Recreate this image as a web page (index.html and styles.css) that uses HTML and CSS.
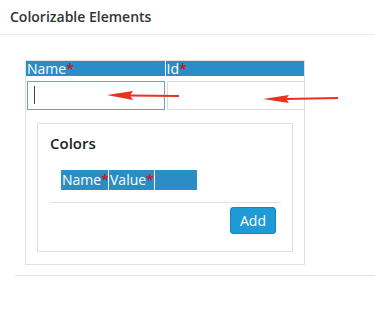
FILE: index.html
```html
<!DOCTYPE html>
<html lang="en">
<head>
  <meta charset="UTF-8" />
  <title>Colorizable Elements</title>
  <link rel="stylesheet" href="styles.css">
</head>
<body>
  <div class="title">Colorizable Elements</div>

  <div class="panel">
    <div class="box">
      <div class="head-row">
        <div class="head-cell wide">Name<span class="req">*</span></div>
        <div class="head-cell wide">Id<span class="req">*</span></div>
      </div>
      <div class="input-row">
        <div class="field-wrap caret">
          <input type="text" class="field focused">
        </div>
        <div class="field-wrap">
          <input type="text" class="field">
        </div>
      </div>

      <div class="colors">
        <div class="colors-title">Colors</div>
        <div class="mini-head">
          <div class="mini-cell c1">Name<span class="req">*</span></div>
          <div class="mini-cell c2">Value<span class="req">*</span></div>
          <div class="mini-cell c3"></div>
        </div>
        <div class="footer">
          <button class="add-btn">Add</button>
        </div>
      </div>
    </div>
  </div>

  <svg class="arrows" width="375" height="320" viewBox="0 0 375 320">
    <polygon points="107,95 133,91 130,95.5 133,100" fill="#e8321f"/>
    <line x1="129" y1="95.6" x2="179" y2="96" stroke="#e8321f" stroke-width="2"/>
    <polygon points="263,99 289,95 286,99 289,103" fill="#e8321f"/>
    <line x1="285" y1="99" x2="338" y2="98" stroke="#e8321f" stroke-width="2"/>
  </svg>
</body>
</html>
```

FILE: styles.css
```css
body {
  margin: 0;
  font-family: "Open Sans", "Liberation Sans", sans-serif;
  color: #333;
  background: #fff;
}

.title {
  height: 34px;
  line-height: 34px;
  padding: 0 10px;
  font-size: 14px;
  font-weight: 600;
  border-bottom: 1px solid #ebebeb;
}

.panel {
  margin-left: 15px;
  padding: 25px 0 10px 10px;
  border-bottom: 1px solid #e3e3e3;
}

.box {
  width: 278px;
  border: 1px solid #e0e0e0;
  padding-bottom: 12px;
}

.head-row {
  display: flex;
  background: #2b8dc5;
  height: 15px;
}

.head-cell {
  color: #fff;
  font-size: 14px;
  line-height: 15px;
  padding-left: 1px;
}

.head-cell.wide {
  width: 138px;
}

.head-cell + .head-cell {
  border-left: 1px solid #fff;
}

.req {
  color: #c21a3a;
  font-weight: 700;
}

.input-row {
  display: flex;
  gap: 2px;
  margin-top: 5px;
  padding-left: 1px;
}

.field-wrap {
  position: relative;
}

.caret::after {
  content: "";
  position: absolute;
  left: 7px;
  top: 5px;
  width: 1px;
  height: 18px;
  background: #444;
}

.field {
  display: block;
  box-sizing: border-box;
  width: 138px;
  height: 29px;
  margin: 0;
  border: 1px solid #dcdcdc;
  padding: 0 6px;
  font-size: 14px;
  outline: none;
}

.field.focused {
  border-color: #6d9ec6;
}

.colors {
  margin: 13px 11px 0 11px;
  border: 1px solid #e0e0e0;
  padding: 9px 11px 17px 12px;
}

.colors-title {
  font-size: 15px;
  font-weight: 600;
  line-height: 20px;
  color: #222;
}

.mini-head {
  display: flex;
  margin: 17px 0 0 11px;
  height: 20px;
  background: #2b8dc5;
  width: 136px;
}

.mini-cell {
  color: #fff;
  font-size: 14px;
  line-height: 20px;
  padding-left: 1px;
}

.mini-cell.c1 { width: 46px; }
.mini-cell.c2 { width: 44px; border-left: 1px solid #fff; }
.mini-cell.c3 { flex: 1; border-left: 1px solid #fff; }

.footer {
  margin-top: 12px;
  border-top: 1px solid #e3e3e3;
  padding-top: 4px;
  padding-right: 5px;
  display: flex;
  justify-content: flex-end;
}

.add-btn {
  width: 46px;
  height: 27px;
  background: #1e9ad6;
  border: 1px solid #1784bb;
  border-radius: 3px;
  color: #fff;
  font-family: "Open Sans", "Liberation Sans", sans-serif;
  font-size: 14px;
  padding: 0;
}

.arrows {
  position: absolute;
  left: 0;
  top: 0;
  pointer-events: none;
}
```
